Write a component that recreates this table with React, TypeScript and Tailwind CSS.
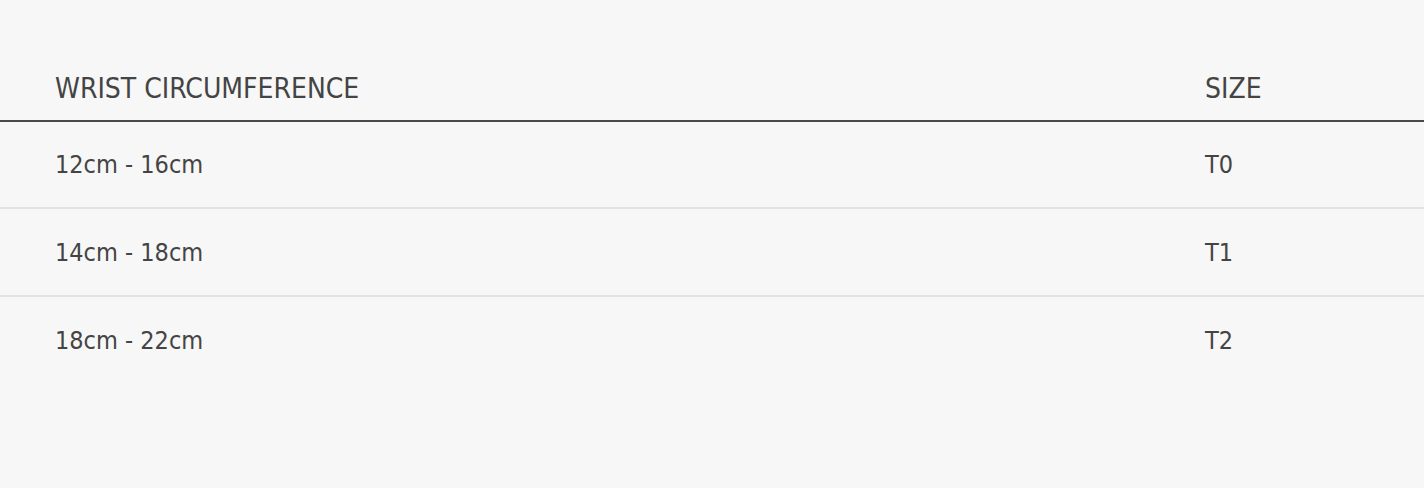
import React from "react";

const rows = [
  { range: "12cm - 16cm", size: "T0" },
  { range: "14cm - 18cm", size: "T1" },
  { range: "18cm - 22cm", size: "T2" },
];

const font = {
  fontFamily: '"DejaVu Sans Condensed", "DejaVu Sans", sans-serif',
};

const rowClass = [
  "flex items-center h-[87px] px-[55px] border-b-2 border-[#e2e2e5] text-[25px] leading-none",
  "flex items-center h-[88px] px-[55px] border-b-2 border-[#e2e2e5] text-[25px] leading-none",
  "flex items-center h-[86px] px-[55px] text-[25px] leading-none",
];

const App = () => {
  return (
    <div
      className="w-full min-h-[488px] bg-[#f7f7f7] pt-[58px] text-[#444444] font-stretch-condensed"
      style={font}
    >
      <div className="flex items-center h-[64px] px-[55px] border-b-2 border-[#4a4a4a] text-[28px] leading-none">
        <span className="flex-1">WRIST CIRCUMFERENCE</span>
        <span className="w-[164px]">SIZE</span>
      </div>
      {rows.map((row, i) => (
        <div key={row.size} className={rowClass[i]}>
          <span className="flex-1">{row.range}</span>
          <span className="w-[164px]">{row.size}</span>
        </div>
      ))}
    </div>
  );
};

export default App;
